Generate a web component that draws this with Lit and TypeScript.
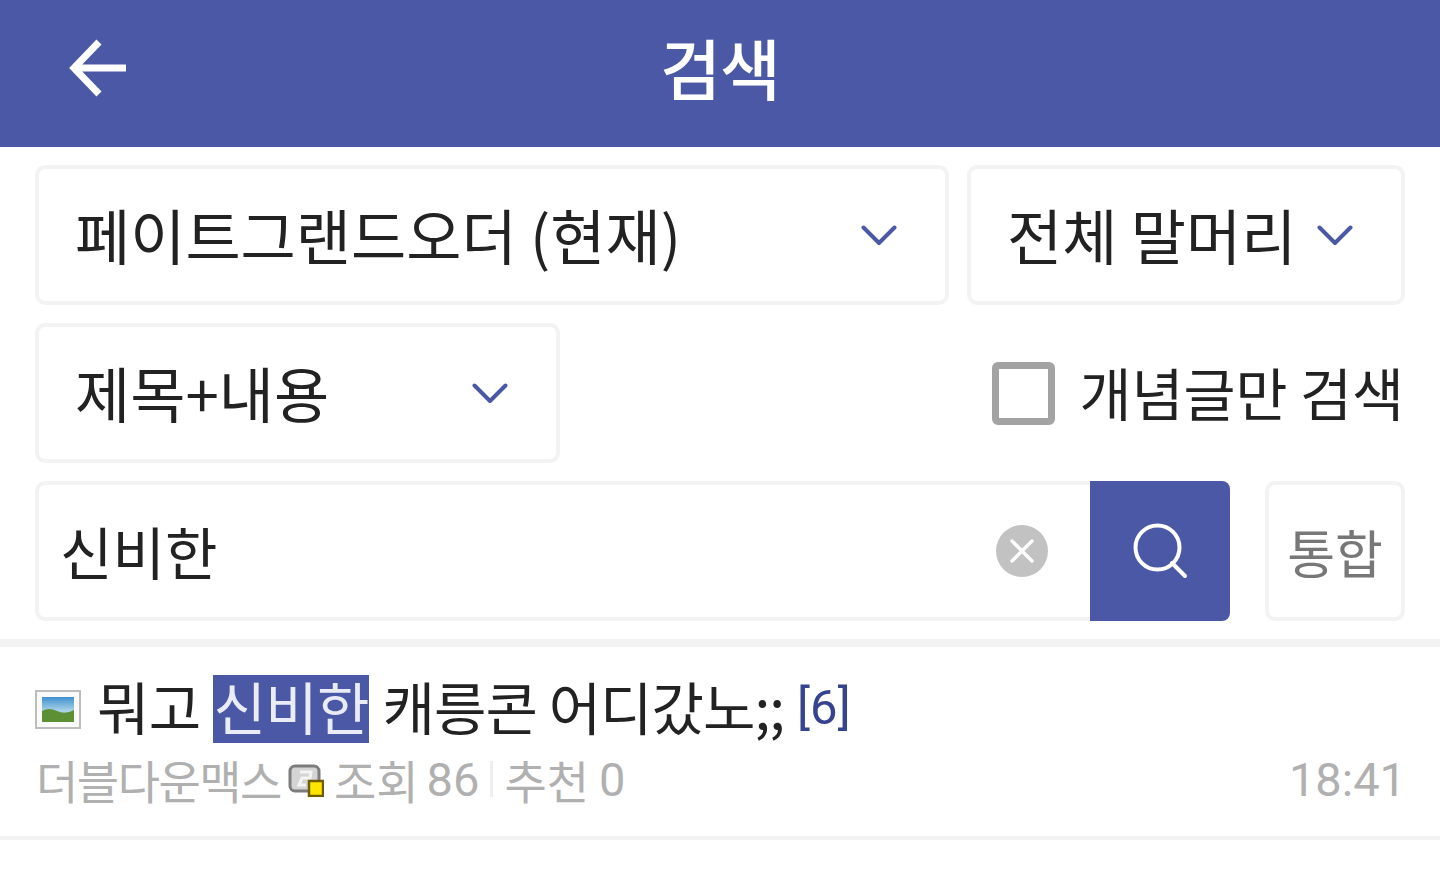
import { LitElement, html, css } from "lit";
import { customElement } from "lit/decorators.js";

const chevron = html`<svg class="chev" width="36" height="22" viewBox="0 0 36 22"><path d="M2.500 3.500 L18 19 L33.500 3.500" fill="none" stroke="#4b58a6" stroke-width="4" stroke-linecap="round" stroke-linejoin="round"/></svg>`;

@customElement("app-root")
export class AppRoot extends LitElement {
  static styles = css`
    :host { display: block; width: 1440px; height: 870px; background: #fff; overflow: hidden;
      font-family: "Noto Sans CJK KR", "Noto Sans", sans-serif; color: #222; }
    .top { height: 147px; background: #4b58a6; display: flex; align-items: center; justify-content: center; position: relative; color: #fff; font-size: 66px; line-height: 1; }
    .top svg { position: absolute; left: 69px; top: 39px; }
    .top span { font-weight: 500; letter-spacing: -1px; padding-bottom: 16px; }
    .form { padding: 18px 35px 0; display: flex; flex-direction: column; gap: 18px; }
    .row { display: flex; align-items: center; height: 140px; }
    .box { box-sizing: border-box; height: 140px; border: 4px solid #f3f3f3; border-radius: 10px; display: flex; align-items: center; font-size: 60px; }
    .sel { justify-content: space-between; padding: 0 48px 0 36px; }
    .sel .t { padding-bottom: 4px; }
    .a { width: 914px; }
    .b { width: 438px; margin-left: 18px; }
    .c { width: 525px; }
    .chk { margin-left: auto; display: flex; align-items: center; gap: 24px; font-size: 56.500px; margin-right: 1px; }
    .chk span { padding-bottom: 4px; }
    .cb { box-sizing: border-box; width: 63px; height: 63px; border: 7px solid #a3a3a3; border-radius: 6px; }
    .search { gap: 0; }
    .input { width: 1055px; border-right: 0; border-radius: 10px 0 0 10px; justify-content: space-between; padding: 0 42px 0 21px; font-size: 57px; }
    .input .t { padding-bottom: 2px; }
    .go { width: 140px; height: 140px; background: #4b58a6; border-radius: 0 8px 8px 0; display: flex; align-items: center; justify-content: center; padding-left: 2px; box-sizing: border-box; }
    .all { width: 140px; margin-left: 35px; justify-content: center; color: #777; font-size: 52px; }
    .clear { width: 52px; height: 52px; border-radius: 50%; background: #c2c2c2; display: flex; align-items: center; justify-content: center; }
    .div { height: 8px; background: #f3f3f3; margin-top: 18px; }
    .item { height: 193px; box-sizing: border-box; border-bottom: 4px solid #f3f3f3; padding: 28px 35px 0; }
    .title { display: flex; align-items: center; font-size: 57px; height: 68px; white-space: pre; letter-spacing: -0.700px; }
    .title .txt { padding-bottom: 8px; }
    .title .rest { letter-spacing: -1px; margin-left: 2px; }
    .pic { margin-right: 16px; }
    mark { background: #4b58a6; color: #e9ebf6; height: 68px; display: inline-flex; align-items: center; padding: 0 0 8px 1px; box-sizing: border-box; }
    .cnt { color: #36438e; margin-left: 13px; font-family: Roboto, sans-serif; font-size: 49px; letter-spacing: 0; padding-bottom: 4px; }
    .meta { display: flex; align-items: center; color: #b0b0b0; font-size: 46px; height: 60px; margin-top: 6px; white-space: pre; }
    .nick { margin-right: 7px; margin-left: 1px; letter-spacing: -1.500px; }
    .lab { margin-right: 8px; }
    .lab2 { margin-right: 10px; }
    .sep { width: 3px; height: 36px; background: #eee; margin: 0 11px; }
    .time { margin-left: auto; margin-right: -1px; font-family: Roboto, sans-serif; font-size: 47px; }
    .num { font-family: Roboto, sans-serif; font-size: 47px; }
    .t { display: block; }
  `;

  render() {
    return html`
      <div class="top">
        <svg width="60" height="60" viewBox="0 0 60 60"><path d="M30 3 L5 29 L30 55 M5 29 H57" fill="none" stroke="#fff" stroke-width="7" stroke-linejoin="miter"/></svg>
        <span>검색</span>
      </div>
      <div class="form">
        <div class="row">
          <div class="box sel a"><span class="t">페이트그랜드오더 (현재)</span>${chevron}</div>
          <div class="box sel b"><span class="t">전체 말머리</span>${chevron}</div>
        </div>
        <div class="row">
          <div class="box sel c"><span class="t">제목+내용</span>${chevron}</div>
          <div class="chk"><div class="cb"></div><span>개념글만 검색</span></div>
        </div>
        <div class="row search">
          <div class="box input"><span class="t">신비한</span>
            <div class="clear"><svg width="24" height="24" viewBox="0 0 24 24"><path d="M2 2 L22 22 M22 2 L2 22" stroke="#fff" stroke-width="3.4" stroke-linecap="round"/></svg></div>
          </div>
          <div class="go"><svg width="56" height="56" viewBox="0 0 56 56"><circle cx="24.500" cy="24.500" r="22" fill="none" stroke="#fff" stroke-width="4"/><path d="M39 40 L52 53" stroke="#fff" stroke-width="4" stroke-linecap="round"/></svg></div>
          <div class="box all">통합</div>
        </div>
      </div>
      <div class="div"></div>
      <div class="item">
        <div class="title">
          <svg class="pic" width="46" height="39" viewBox="0 0 46 39">
            <defs><linearGradient id="sky" x1="0" y1="0" x2="0" y2="1"><stop offset="0" stop-color="#3f8fd0"/><stop offset="0.55" stop-color="#a9d3e6"/></linearGradient></defs>
            <rect x="1" y="1" width="44" height="37" fill="#fafafa" stroke="#bdbdbd" stroke-width="2"/>
            <rect x="7" y="7" width="32" height="25" fill="url(#sky)"/>
            <path d="M7 21 Q14 17 22 21 T39 20 V32 H7 Z" fill="#5d8f35"/>
          </svg>
          <span class="txt">뭐고 </span><mark>신비한</mark><span class="txt rest"> 캐릉콘 어디갔노;;</span><span class="cnt">[6]</span>
        </div>
        <div class="meta">
          <span class="nick">더블다운맥스</span>
          <svg width="36" height="36" viewBox="0 0 36 36" style="margin-right:10px">
            <rect x="2" y="5" width="29" height="25" rx="5" fill="#d4d4d4" stroke="#7c7c7c" stroke-width="3"/>
            <path d="M12 11 H23 L22 17 H14 L11 24 H18" stroke="#f4f4f4" stroke-width="3" fill="none"/>
            <rect x="21" y="20" width="14" height="15" fill="#ffe600" stroke="#6f5c00" stroke-width="2.500"/>
          </svg>
          <span class="lab">조회</span><span class="num">86</span><span class="sep"></span><span class="lab2">추천</span><span class="num">0</span>
          <span class="time">18:41</span>
        </div>
      </div>
    `;
  }
}
